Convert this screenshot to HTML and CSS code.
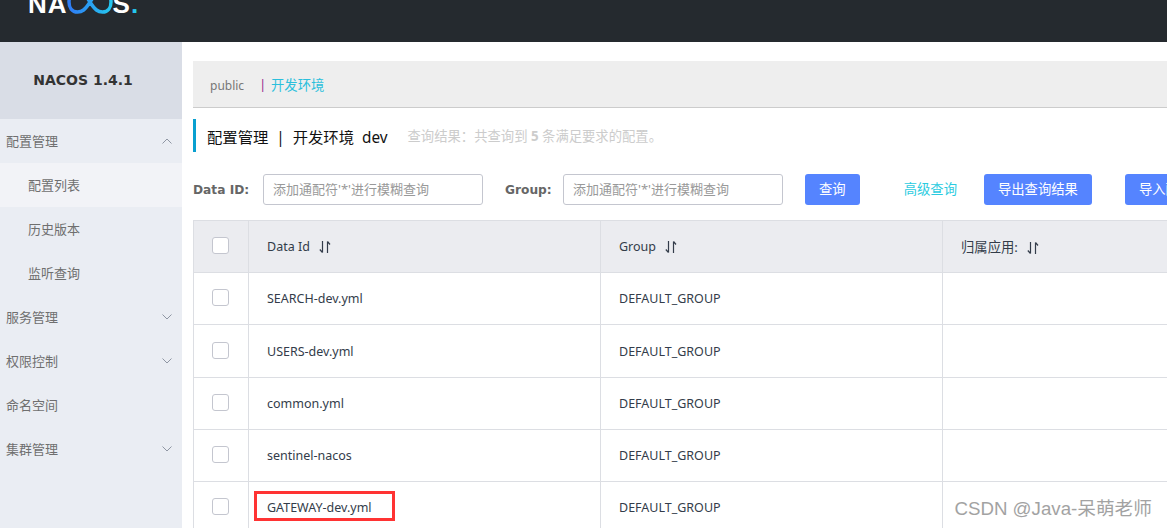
FILE: index.html
```html
<!DOCTYPE html>
<html lang="en">
<head>
    <meta charset="UTF-8">
    <meta name="viewport" content="width=device-width, initial-scale=1.0">
    <title>NACOS 1.4.1</title>
    <link rel="stylesheet" href="styles.css">
</head>
<body>

    <!-- Header -->
    <header class="top-bar">
        <div class="logo">
            <span>NA</span>
            <svg class="logo-loop" viewBox="0 0 46 24" width="46" height="24">
                <defs>
                    <linearGradient id="loopFill" x1="0" x2="1" y1="0" y2="0">
                        <stop offset="0" stop-color="#2f7cf6"/>
                        <stop offset="1" stop-color="#25c6ee"/>
                    </linearGradient>
                </defs>
                <path d="M23 12C18 4 15 2 10.500 2C5 2 2 6.500 2 12C2 17.500 5 22 10.500 22C15 22 18 20 23 12C28 4 31 2 35.500 2C41 2 44 6.500 44 12C44 17.500 41 22 35.500 22C31 22 28 20 23 12Z" fill="none" stroke="url(#loopFill)" stroke-width="3.500"/>
            </svg>
            <span>S</span><span class="logo-dot">.</span>
        </div>
    </header>

    <div class="layout">
        <!-- Sidebar -->
        <aside class="sidebar">
            <div class="version">NACOS 1.4.1</div>
            <div class="nav-item">配置管理
                <svg class="arrow" viewBox="0 0 10 6" width="10" height="6"><path d="M0.500 5.500L5 1L9.500 5.500" fill="none" stroke="#8f96a3"/></svg>
            </div>
            <div class="nav-sub active">配置列表</div>
            <div class="nav-sub">历史版本</div>
            <div class="nav-sub">监听查询</div>
            <div class="nav-item">服务管理
                <svg class="arrow" viewBox="0 0 10 6" width="10" height="6"><path d="M0.500 0.500L5 5L9.500 0.500" fill="none" stroke="#8f96a3"/></svg>
            </div>
            <div class="nav-item">权限控制
                <svg class="arrow" viewBox="0 0 10 6" width="10" height="6"><path d="M0.500 0.500L5 5L9.500 0.500" fill="none" stroke="#8f96a3"/></svg>
            </div>
            <div class="nav-item">命名空间</div>
            <div class="nav-item">集群管理
                <svg class="arrow" viewBox="0 0 10 6" width="10" height="6"><path d="M0.500 0.500L5 5L9.500 0.500" fill="none" stroke="#8f96a3"/></svg>
            </div>
        </aside>

        <!-- Main -->
        <main class="content">
            <div class="namespace-bar">
                <span class="ns-public">public</span>
                <span class="ns-sep">|</span>
                <span class="ns-link">开发环境</span>
            </div>

            <div class="page-title">
                <h1>配置管理&nbsp; |&nbsp; 开发环境&nbsp; dev</h1>
                <span class="result-count">查询结果：共查询到 <b>5</b> 条满足要求的配置。</span>
            </div>

            <div class="filters">
                <label class="filter-label">Data ID:</label>
                <input class="filter-input input-id" type="text" placeholder="添加通配符'*'进行模糊查询">
                <label class="filter-label label-group">Group:</label>
                <input class="filter-input" type="text" placeholder="添加通配符'*'进行模糊查询">
                <button class="btn btn-query">查询</button>
                <a class="advanced">高级查询</a>
                <button class="btn btn-export">导出查询结果</button>
                <button class="btn btn-import">导入配置</button>
            </div>

            <div class="table-wrap">
                <table class="config-table">
                    <colgroup>
                        <col class="col-check"><col class="col-id"><col class="col-group"><col class="col-app">
                    </colgroup>
                    <thead>
                        <tr>
                            <th><span class="checkbox"></span></th>
                            <th>Data Id <svg class="sort" viewBox="0 0 12 14" width="12" height="14"><path d="M3.500 1V12.500M3.500 12.500L0.800 9.500M8.500 13V1.500M8.500 1.500L11 4.500" fill="none" stroke="#333c4a" stroke-width="1.200"/></svg></th>
                            <th>Group <svg class="sort" viewBox="0 0 12 14" width="12" height="14"><path d="M3.500 1V12.500M3.500 12.500L0.800 9.500M8.500 13V1.500M8.500 1.500L11 4.500" fill="none" stroke="#333c4a" stroke-width="1.200"/></svg></th>
                            <th>归属应用: <svg class="sort" viewBox="0 0 12 14" width="12" height="14"><path d="M3.500 1V12.500M3.500 12.500L0.800 9.500M8.500 13V1.500M8.500 1.500L11 4.500" fill="none" stroke="#333c4a" stroke-width="1.200"/></svg></th>
                        </tr>
                    </thead>
                    <tbody>
                        <tr><td><span class="checkbox"></span></td><td>SEARCH-dev.yml</td><td>DEFAULT_GROUP</td><td></td></tr>
                        <tr class="tall-row"><td><span class="checkbox"></span></td><td>USERS-dev.yml</td><td>DEFAULT_GROUP</td><td></td></tr>
                        <tr><td><span class="checkbox"></span></td><td>common.yml</td><td>DEFAULT_GROUP</td><td></td></tr>
                        <tr><td><span class="checkbox"></span></td><td>sentinel-nacos</td><td>DEFAULT_GROUP</td><td></td></tr>
                        <tr><td><span class="checkbox"></span></td><td><span class="marked">GATEWAY-dev.yml</span></td><td>DEFAULT_GROUP</td><td></td></tr>
                    </tbody>
                </table>
            </div>
        </main>
    </div>

    <div class="watermark">CSDN @Java-呆萌老师</div>

</body>
</html>
```

FILE: styles.css
```css
/* Page */
html, body {
    height: 528px;
    overflow: hidden;
}

body {
    margin: 0;
    background-color: #fff;
    color: #333c4a;
    font-family: "Noto Sans", "Noto Sans CJK SC", sans-serif;
    font-size: 12.500px;
}

/* Header */
.top-bar {
    height: 42px;
    background-color: #252a2f;
    overflow: hidden;
}

.logo {
    display: flex;
    align-items: flex-start;
    height: 14px;
    margin-left: 28px;
    color: #fff;
    font-family: "Liberation Sans", sans-serif;
    font-size: 26px;
    font-weight: bold;
    line-height: 8px;
    letter-spacing: 1px;
}

.logo-loop {
    flex: none;
    margin: -10px 0 0 -1px;
}

.logo-dot {
    color: #25c6ee;
}

/* Layout */
.layout {
    display: flex;
    height: 486px;
}

/* Sidebar */
.sidebar {
    flex: none;
    width: 182px;
    background-color: #eaedf3;
    color: #6f6f6f;
    font-size: 13px;
}

.version {
    box-sizing: border-box;
    height: 77px;
    padding-right: 16px;
    line-height: 77px;
    background-color: #d9dde6;
    color: #333;
    font-family: "DejaVu Sans", sans-serif;
    font-size: 14px;
    font-weight: bold;
    text-align: center;
}

.nav-item, .nav-sub {
    display: flex;
    align-items: center;
    justify-content: space-between;
    box-sizing: border-box;
    height: 44px;
    padding-bottom: 1px;
}

.nav-item {
    padding-right: 10px;
    padding-left: 6px;
}

.nav-sub {
    padding-left: 28px;
}

.nav-sub.active {
    background-color: #f2f3f7;
}

.arrow {
    flex: none;
}

/* Main */
.content {
    flex: 1;
    min-width: 0;
    padding: 19px 0 0 11px;
    overflow: hidden;
}

.namespace-bar {
    display: flex;
    align-items: center;
    height: 46px;
    padding-left: 17px;
    border-bottom: 1px solid #ccc;
    background-color: #eee;
}

.ns-public {
    color: #777;
    font-size: 12px;
    margin-right: 15px;
    padding-top: 2px;
}

.ns-sep {
    color: #93278f;
    margin-right: 5px;
}

.ns-link {
    color: #2bbfdc;
    font-size: 13.330px;
}

.page-title {
    display: flex;
    align-items: center;
    height: 33px;
    margin-top: 11px;
    padding-left: 11px;
    border-left: 3px solid #09a0d0;
}

.page-title h1 {
    margin: 0;
    color: #111;
    font-size: 15.330px;
    font-weight: normal;
}

.result-count {
    margin-left: 20px;
    color: #ccc;
    font-size: 13.330px;
}

/* Filters */
.filters {
    display: flex;
    align-items: center;
    height: 31px;
    margin-top: 22px;
    white-space: nowrap;
}

.filter-label {
    flex: none;
    width: 70px;
    color: #666;
    font-family: "DejaVu Sans", sans-serif;
    font-size: 12.200px;
    font-weight: bold;
}

.label-group {
    width: 58px;
    margin-left: 22px;
}

.filter-input {
    flex: none;
    box-sizing: border-box;
    width: 220px;
    height: 31px;
    padding: 0 9px 2px;
    border: 1px solid #c4c6cf;
    border-radius: 3px;
    font-family: inherit;
    font-size: 13px;
}

.filter-input::placeholder {
    color: #999;
}

.btn {
    flex: none;
    height: 31px;
    padding: 0 14px 3px;
    border: none;
    border-radius: 3px;
    background-color: #5584ff;
    color: #fff;
    font-family: inherit;
    font-size: 13.330px;
}

.btn-query {
    margin-left: 22px;
}

.advanced {
    flex: none;
    margin: 0 27px 3px 44px;
    color: #2bcbe0;
    font-size: 13.330px;
}

.btn-import {
    margin-left: 33px;
}

/* Table */
.table-wrap {
    margin-top: 15px;
}

.config-table {
    width: 1100px;
    border-collapse: collapse;
    table-layout: fixed;
}

.col-check { width: 55px; }
.col-id { width: 352px; }
.col-group { width: 342px; }

.config-table th, .config-table td {
    height: 52px;
    box-sizing: border-box;
    padding: 0 0 0 18px;
    border: 1px solid #dcdee3;
    font-weight: normal;
    text-align: left;
}

.config-table .tall-row td {
    height: 53px;
}

.config-table th {
    background-color: #ebecf0;
}

.config-table th:last-child {
    font-size: 13.330px;
}

.checkbox {
    display: block;
    box-sizing: border-box;
    width: 17px;
    height: 17px;
    margin-bottom: 2px;
    border: 1px solid #c4c6cf;
    border-radius: 3px;
    background-color: #fff;
}

.sort {
    margin-left: 6px;
    vertical-align: -3px;
}

/* Red annotation around the last row */
.marked {
    position: relative;
}

.marked::after {
    content: "";
    position: absolute;
    top: -8px;
    left: -13px;
    width: 135px;
    height: 24px;
    border: 3px solid #f33;
}

.watermark {
    position: absolute;
    right: 15px;
    bottom: 8px;
    color: #999;
    font-family: "Liberation Sans", "Noto Sans CJK SC", sans-serif;
    font-size: 18.700px;
    opacity: 0.9;
}
```
